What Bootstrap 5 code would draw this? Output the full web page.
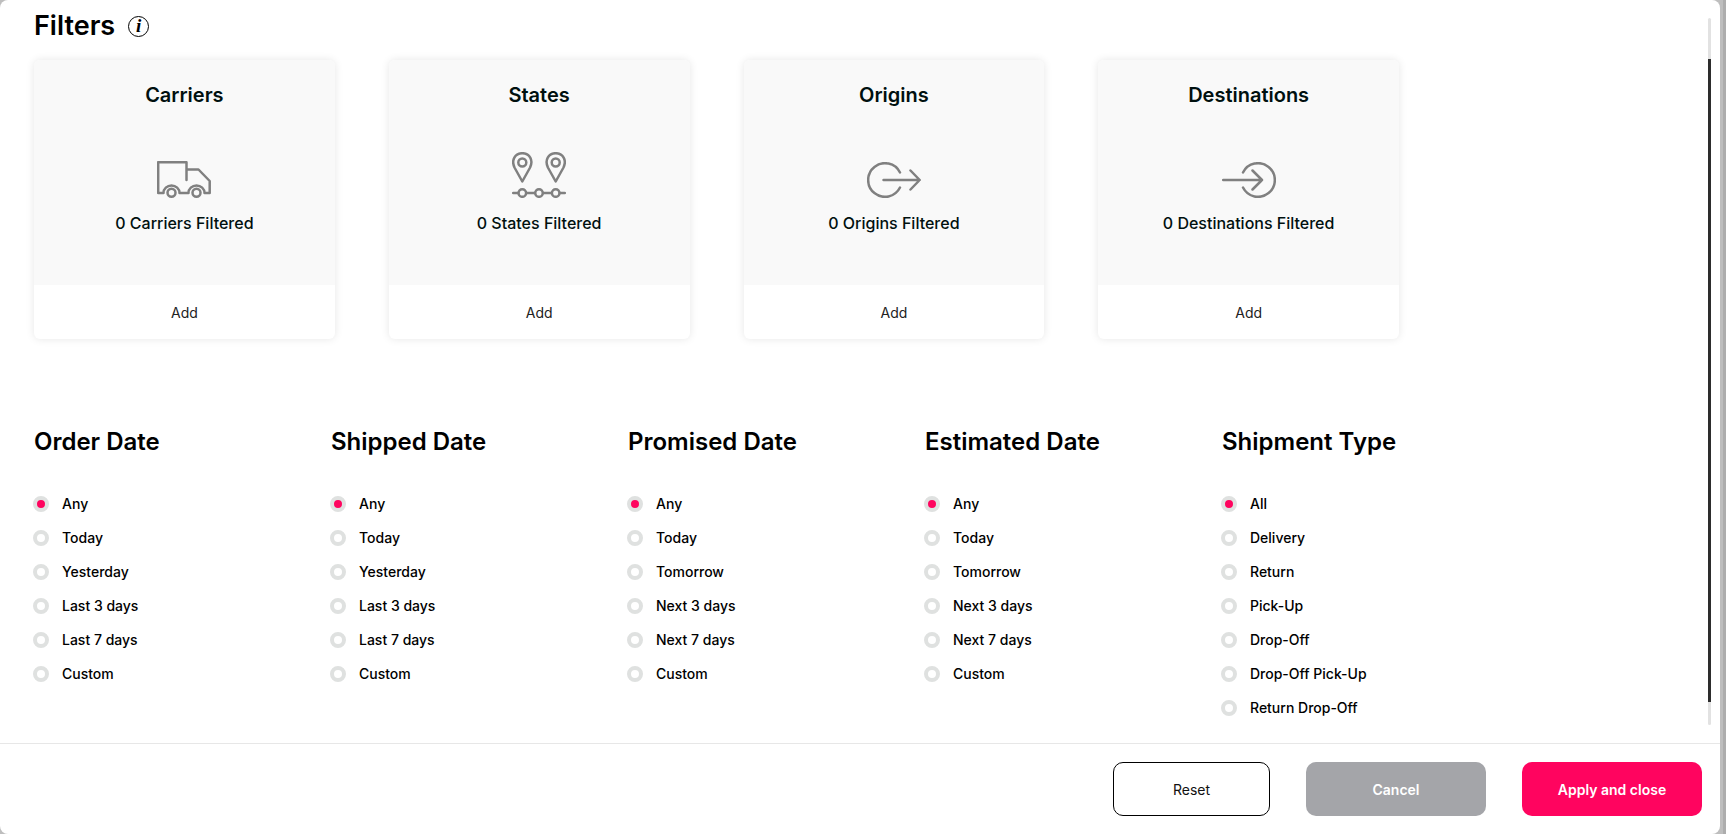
<!DOCTYPE html>
<html lang="en">
<head>
<meta charset="utf-8">
<meta name="viewport" content="width=device-width, initial-scale=1">
<title>Filters</title>
<link href="https://cdn.jsdelivr.net/npm/bootstrap@5.3.0/dist/css/bootstrap.min.css" rel="stylesheet">
<style>
body { font-family: Inter, "Liberation Sans", sans-serif; background: linear-gradient(to left, #adadad 3px, #bebebe 3px); color: #000; font-size: 14px; }
.panel { min-height: 100vh; margin-right: 6px; background: #fff; border-radius: 8px; }
.panel-main { padding: 0 24px 0 34px; }
h1 { font-size: 27px; font-weight: 600; line-height: 32px; }
h2 { font-size: 24px; font-weight: 600; line-height: 32px; }
h3 { font-size: 20px; font-weight: 600; line-height: 28px; color: #00100f; }
.head-row { padding: 10px 0 18px; gap: 13px; }
.filter-col { flex: 0 0 21.5%; padding-right: 54px; }
.filter-card { border: 0; border-radius: 6px; box-shadow: 0 0 8px rgba(0,0,0,.1); overflow: hidden; }
.filter-body { height: 225px; background: #f9f9f9; padding-top: 21px; }
.icon-slot { height: 89px; }
.icon-slot svg { fill: none; stroke: gray; stroke-width: 2.5; stroke-linecap: round; stroke-linejoin: round; }
.filter-count { font-size: 16px; font-weight: 500; line-height: 20px; margin: 15px 0 0; color: #00100f; }
.add-btn { height: 54px; border: 0; border-radius: 0; font-size: 14px; color: #222; }
.date-row { padding: 87px 0 18px; }
.date-col { flex: 0 0 18%; }
.date-col h2 { margin-bottom: 29px; }
.opt { height: 34px; margin-left: -1px; }
.opt label { font-weight: 500; font-size: 14px; line-height: 20px; }
.opt input { appearance: none; flex: none; width: 16px; height: 16px; margin: 0 13px 0 0; border: 4px solid #dfe1e0; border-radius: 50%; background: #fff; }
.opt input:checked { background: #ff045f; }
.scroll-track { width: 3px; margin: 18px 9px 18px 0; background: #e2e2e2; padding: 41px 0 23px; border-radius: 2px; }
.scroll-thumb { background: #2d2d2d; }
.panel-foot { border-top: 1px solid #e7e7e7; padding: 18px; gap: 36px; }
.panel-foot .btn { width: 180px; height: 54px; border-radius: 10px; font-size: 14px; }
.panel-foot .btn-reset { width: 157px; border: 1px solid #000; color: #111; }
.btn-cancel, .btn-cancel:hover { background: #a4a5a9; color: #fff; font-weight: 600; }
.btn-apply, .btn-apply:hover { background: #ff045f; color: #fff; font-weight: 600; }
.info-btn { width: 21px; height: 21px; border: 1px solid #000; border-radius: 50%; background: #fff; font: italic 700 19px/18px "Liberation Serif", serif; color: #000; }
</style>
</head>
<body>
<div class="panel d-flex flex-column">
  <div class="d-flex flex-grow-1">
    <main class="panel-main flex-grow-1">
      <div class="head-row d-flex align-items-center">
        <h1 class="m-0">Filters</h1>
        <button type="button" class="info-btn p-0" aria-label="About filters">i</button>
      </div>
      <div class="d-flex">
        <div class="filter-col"><section class="card filter-card text-center">
          <div class="filter-body"><h3 class="m-0">Carriers</h3>
            <div class="icon-slot d-flex align-items-end justify-content-center"><svg width="54" height="37" viewBox="0 0 54 37"><path d="M6.500 32H1.200V1.200H29.500V19M30 8.500H41.500L52.700 20V32H47.500a8 7.500 0 0 0-16 0H22.500a8 7.500 0 0 0-16 0"/><circle cx="14.500" cy="31.700" r="4"/><circle cx="39.500" cy="31.700" r="4"/></svg></div>
            <p class="filter-count">0 Carriers Filtered</p></div>
          <button type="button" class="btn add-btn">Add</button>
        </section></div>
        <div class="filter-col"><section class="card filter-card text-center">
          <div class="filter-body"><h3 class="m-0">States</h3>
            <div class="icon-slot d-flex align-items-end justify-content-center"><svg width="54" height="46" viewBox="0 0 54 46"><path d="M10.300 29.500L2.500 15.500C-1 8 3 1.200 10.300 1.200S21.600 8 18.100 15.500ZM43.700 29.500L35.900 15.500C32.400 8 36.400 1.200 43.700 1.200S55 8 51.500 15.500ZM1.200 41H6.300M14.300 41H23M31 41H39.700M47.700 41H52.800"/><circle cx="10.300" cy="10.500" r="4"/><circle cx="43.700" cy="10.500" r="4"/><circle cx="10.300" cy="41" r="3.800"/><circle cx="27" cy="41" r="3.800"/><circle cx="43.700" cy="41" r="3.800"/></svg></div>
            <p class="filter-count">0 States Filtered</p></div>
          <button type="button" class="btn add-btn">Add</button>
        </section></div>
        <div class="filter-col"><section class="card filter-card text-center">
          <div class="filter-body"><h3 class="m-0">Origins</h3>
            <div class="icon-slot d-flex align-items-end justify-content-center"><svg width="54" height="36" viewBox="0 0 54 36"><path d="M33 10.500A16.800 16.800 0 1 0 33 25.500M16.500 18H52.500M43.500 8.500L52.700 18L43.500 27.500"/></svg></div>
            <p class="filter-count">0 Origins Filtered</p></div>
          <button type="button" class="btn add-btn">Add</button>
        </section></div>
        <div class="filter-col"><section class="card filter-card text-center">
          <div class="filter-body"><h3 class="m-0">Destinations</h3>
            <div class="icon-slot d-flex align-items-end justify-content-center"><svg width="54" height="36" viewBox="0 0 54 36"><path d="M21 10.500A16.800 16.800 0 1 1 21 25.500M1.200 18H40M30.500 8.500L40 18L30.500 27.500"/></svg></div>
            <p class="filter-count">0 Destinations Filtered</p></div>
          <button type="button" class="btn add-btn">Add</button>
        </section></div>
      </div>
      <form class="date-row d-flex">
        <div class="date-col" role="radiogroup" aria-labelledby="h-order"><h2 id="h-order">Order Date</h2>
          <div class="opt d-flex align-items-center"><input type="radio" name="order" id="o1" checked><label for="o1">Any</label></div>
          <div class="opt d-flex align-items-center"><input type="radio" name="order" id="o2"><label for="o2">Today</label></div>
          <div class="opt d-flex align-items-center"><input type="radio" name="order" id="o3"><label for="o3">Yesterday</label></div>
          <div class="opt d-flex align-items-center"><input type="radio" name="order" id="o4"><label for="o4">Last 3 days</label></div>
          <div class="opt d-flex align-items-center"><input type="radio" name="order" id="o5"><label for="o5">Last 7 days</label></div>
          <div class="opt d-flex align-items-center"><input type="radio" name="order" id="o6"><label for="o6">Custom</label></div>
        </div>
        <div class="date-col" role="radiogroup" aria-labelledby="h-shipped"><h2 id="h-shipped">Shipped Date</h2>
          <div class="opt d-flex align-items-center"><input type="radio" name="shipped" id="s1" checked><label for="s1">Any</label></div>
          <div class="opt d-flex align-items-center"><input type="radio" name="shipped" id="s2"><label for="s2">Today</label></div>
          <div class="opt d-flex align-items-center"><input type="radio" name="shipped" id="s3"><label for="s3">Yesterday</label></div>
          <div class="opt d-flex align-items-center"><input type="radio" name="shipped" id="s4"><label for="s4">Last 3 days</label></div>
          <div class="opt d-flex align-items-center"><input type="radio" name="shipped" id="s5"><label for="s5">Last 7 days</label></div>
          <div class="opt d-flex align-items-center"><input type="radio" name="shipped" id="s6"><label for="s6">Custom</label></div>
        </div>
        <div class="date-col" role="radiogroup" aria-labelledby="h-promised"><h2 id="h-promised">Promised Date</h2>
          <div class="opt d-flex align-items-center"><input type="radio" name="promised" id="p1" checked><label for="p1">Any</label></div>
          <div class="opt d-flex align-items-center"><input type="radio" name="promised" id="p2"><label for="p2">Today</label></div>
          <div class="opt d-flex align-items-center"><input type="radio" name="promised" id="p3"><label for="p3">Tomorrow</label></div>
          <div class="opt d-flex align-items-center"><input type="radio" name="promised" id="p4"><label for="p4">Next 3 days</label></div>
          <div class="opt d-flex align-items-center"><input type="radio" name="promised" id="p5"><label for="p5">Next 7 days</label></div>
          <div class="opt d-flex align-items-center"><input type="radio" name="promised" id="p6"><label for="p6">Custom</label></div>
        </div>
        <div class="date-col" role="radiogroup" aria-labelledby="h-estimated"><h2 id="h-estimated">Estimated Date</h2>
          <div class="opt d-flex align-items-center"><input type="radio" name="estimated" id="e1" checked><label for="e1">Any</label></div>
          <div class="opt d-flex align-items-center"><input type="radio" name="estimated" id="e2"><label for="e2">Today</label></div>
          <div class="opt d-flex align-items-center"><input type="radio" name="estimated" id="e3"><label for="e3">Tomorrow</label></div>
          <div class="opt d-flex align-items-center"><input type="radio" name="estimated" id="e4"><label for="e4">Next 3 days</label></div>
          <div class="opt d-flex align-items-center"><input type="radio" name="estimated" id="e5"><label for="e5">Next 7 days</label></div>
          <div class="opt d-flex align-items-center"><input type="radio" name="estimated" id="e6"><label for="e6">Custom</label></div>
        </div>
        <div class="date-col" role="radiogroup" aria-labelledby="h-type"><h2 id="h-type">Shipment Type</h2>
          <div class="opt d-flex align-items-center"><input type="radio" name="type" id="t1" checked><label for="t1">All</label></div>
          <div class="opt d-flex align-items-center"><input type="radio" name="type" id="t2"><label for="t2">Delivery</label></div>
          <div class="opt d-flex align-items-center"><input type="radio" name="type" id="t3"><label for="t3">Return</label></div>
          <div class="opt d-flex align-items-center"><input type="radio" name="type" id="t4"><label for="t4">Pick-Up</label></div>
          <div class="opt d-flex align-items-center"><input type="radio" name="type" id="t5"><label for="t5">Drop-Off</label></div>
          <div class="opt d-flex align-items-center"><input type="radio" name="type" id="t6"><label for="t6">Drop-Off Pick-Up</label></div>
          <div class="opt d-flex align-items-center"><input type="radio" name="type" id="t7"><label for="t7">Return Drop-Off</label></div>
        </div>
      </form>
    </main>
    <div class="scroll-track d-flex flex-column" aria-hidden="true"><div class="scroll-thumb flex-grow-1"></div></div>
  </div>
  <footer class="panel-foot d-flex justify-content-end">
    <button type="button" class="btn btn-reset">Reset</button>
    <button type="button" class="btn btn-cancel">Cancel</button>
    <button type="button" class="btn btn-apply">Apply and close</button>
  </footer>
</div>
<script src="https://cdn.jsdelivr.net/npm/bootstrap@5.3.0/dist/js/bootstrap.bundle.min.js"></script>
</body>
</html>
